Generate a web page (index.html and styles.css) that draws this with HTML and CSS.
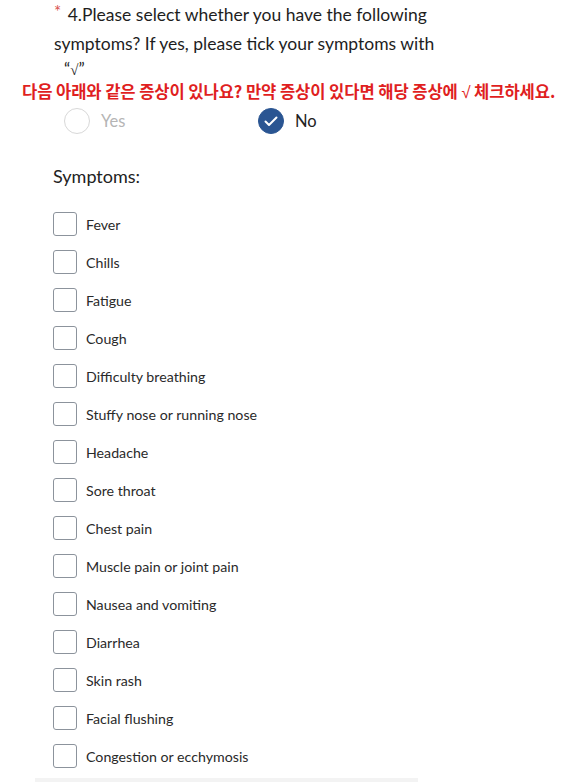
FILE: index.html
```html
<!DOCTYPE html>
<html>
<head>
<meta charset="utf-8">
<link rel="stylesheet" href="styles.css">
</head>
<body>
<div class="page">
  <div class="question">
    <div class="title"><span class="req">*</span> 4.Please select whether you have the following symptoms? If yes, please tick your symptoms with</div>
    <div class="tick">“<span class="sq">√</span>”</div>
    <div class="ko">다음 아래와 같은 증상이 있나요? 만약 증상이 있다면 해당 증상에 <span class="sq2">√</span> 체크하세요.</div>
    <div class="radios">
      <div class="radio"><span class="circle"></span><span class="rlabel off">Yes</span></div>
      <div class="radio"><span class="circle on"><svg width="14" height="11" viewBox="0 0 14 11"><path d="M1.5 5.5 L5 9 L12.5 1.5" fill="none" stroke="#fff" stroke-width="2" stroke-linecap="round" stroke-linejoin="round"/></svg></span><span class="rlabel">No</span></div>
    </div>
  </div>
  <div class="symptoms">
    <div class="shead">Symptoms:</div>
    <ul class="list">
      <li><span class="box"></span>Fever</li>
      <li><span class="box"></span>Chills</li>
      <li><span class="box"></span>Fatigue</li>
      <li><span class="box"></span>Cough</li>
      <li><span class="box"></span>Difficulty breathing</li>
      <li><span class="box"></span>Stuffy nose or running nose</li>
      <li><span class="box"></span>Headache</li>
      <li><span class="box"></span>Sore throat</li>
      <li><span class="box"></span>Chest pain</li>
      <li><span class="box"></span>Muscle pain or joint pain</li>
      <li><span class="box"></span>Nausea and vomiting</li>
      <li><span class="box"></span>Diarrhea</li>
      <li><span class="box"></span>Skin rash</li>
      <li><span class="box"></span>Facial flushing</li>
      <li><span class="box"></span>Congestion or ecchymosis</li>
    </ul>
    <div class="bar"></div>
  </div>
</div>
</body>
</html>
```
FILE: styles.css
```css
html, body { margin: 0; padding: 0; background: #fff; }
body { font-family: "Lato", "Noto Sans", sans-serif; color: #222; width: 568px; height: 782px; overflow: hidden; }
.question { padding: 0 0 0 54px; }
.title { font-size: 17.5px; line-height: 29px; width: 400px; color: #1e1e1e; }
.req { color: #d9534f; font-size: 17px; line-height: 17px; vertical-align: top; position: relative; top: 3px; margin-right: 2px; }
.tick { font-size: 17px; line-height: 22px; padding-left: 10px; color: #1e1e1e; }
.sq { font-family: "Liberation Serif", serif; font-style: italic; font-size: 15px; }
.ko { margin-left: -32px; font-family: "Noto Sans CJK KR", sans-serif; font-weight: 700; color: #e01f1f; font-size: 16.6px; line-height: 20px; white-space: nowrap; letter-spacing: -0.1px; }
.sq2 { font-family: "Liberation Sans", sans-serif; font-weight: 400; }
.radios { display: flex; padding-left: 10px; margin-top: 3px; height: 30px; align-items: center; }
.radio { display: flex; align-items: center; width: 194px; }
.circle { border: 1px solid #d8d8d8; border-radius: 50%; box-sizing: border-box; display: flex; align-items: center; justify-content: center; width: 26px; height: 26px; }
.circle.on { background: #2a5592; border-color: #2a5592; }
.rlabel { margin-left: 11px; font-size: 16.5px; color: #222; }
.rlabel.off { color: #b5b5b5; }
.symptoms { padding-left: 53px; margin-top: 28px; }
.shead { font-size: 18px; color: #222; line-height: 24px; }
.list { list-style: none; margin: 17px 0 0; padding: 0; }
.list li { display: flex; align-items: center; height: 38px; font-size: 14.2px; color: #2a2a2a; }
.box { width: 24px; height: 24px; box-sizing: border-box; border: 1.5px solid #8c939c; border-radius: 3px; margin-right: 9px; flex: none; }
.bar { margin: 3px 0 0 -18px; width: 383px; height: 6px; background: #f3f3f3; }
```
